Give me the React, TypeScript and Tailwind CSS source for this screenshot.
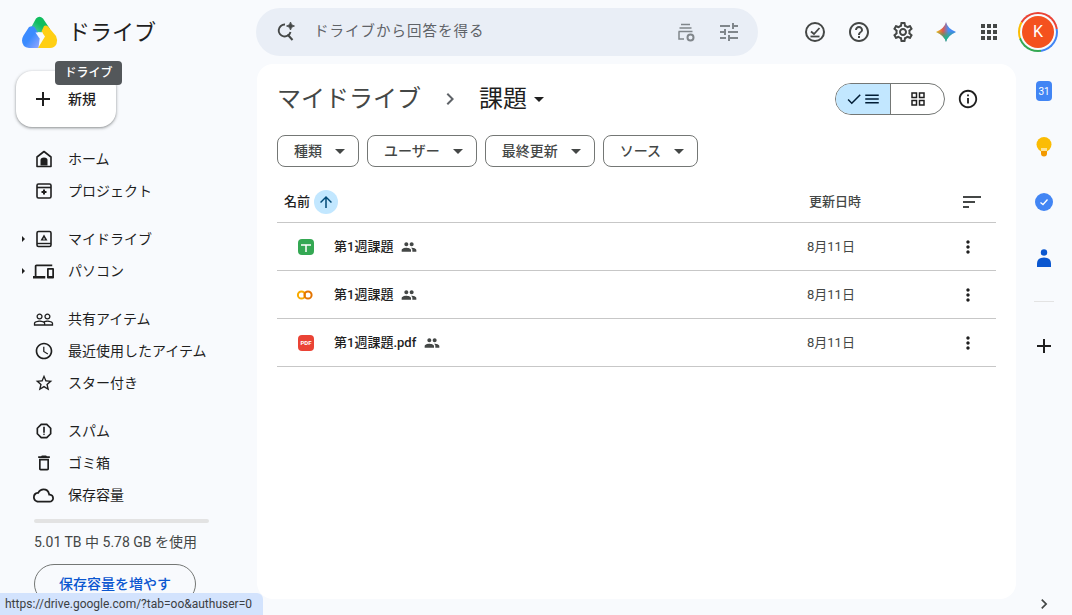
import {
  MdAdd,
  MdApps,
  MdArrowDropDown,
  MdArrowUpward,
  MdCheck,
  MdChevronRight,
  MdInfoOutline,
  MdMenu,
  MdMoreVert,
  MdOutlineAccessTime,
  MdOutlineCloud,
  MdOutlineDelete,
  MdOutlineDevices,
  MdOutlineGridView,
  MdOutlineHelpOutline,
  MdOutlineReport,
  MdOutlineSettings,
  MdPeople,
  MdPeopleOutline,
  MdSort,
  MdStarBorder,
  MdTune,
} from "react-icons/md";
import type { ReactNode } from "react";

const font = { fontFamily: 'Roboto, "Noto Sans CJK JP", sans-serif' };

function DriveLogo() {
  return (
    <svg width="36" height="32" viewBox="0 0 36 32">
      <defs>
        <linearGradient id="lg-blue" x1="0" y1="0" x2="1" y2="1">
          <stop offset="0.5" stopColor="#3b8bff" />
          <stop offset="1" stopColor="#9aa8ff" />
        </linearGradient>
        <linearGradient id="lg-green" x1="0" y1="1" x2="1" y2="0">
          <stop offset="0" stopColor="#5fc8c0" />
          <stop offset="0.5" stopColor="#10bd5f" />
        </linearGradient>
      </defs>
      <path d="M14 2.5Q17.5 -1 21 2.5L28 13L24 13L20.500 16.500L14 16L8 13.500Z" fill="url(#lg-green)" />
      <path d="M7 11Q10 9.500 12.500 11L14 13.500L18 20L16.500 32H7Q0 31 0 24.500Q0 22 1.500 19.500Z" fill="url(#lg-blue)" />
      <path d="M22 10Q24 9 26 10.500L34 20Q36 24 34.500 28Q32.500 32 28 32H16L23 20.500L19.500 15.500Z" fill="#ffcf14" />
      <path d="M13.500 16.500H21L17.500 22.500Z" fill="#f8fafd" />
    </svg>
  );
}

function HomeIcon() {
  return (
    <svg width="20" height="20" viewBox="0 0 20 20" fill="none">
      <path d="M10 2.500 3 8v9.500h14V8z" stroke="#1f1f1f" strokeWidth="1.600" strokeLinejoin="round" />
      <path d="M6.500 16.500V11Q6.500 8.500 10 8.500T13.500 11v5.500z" fill="#1f1f1f" />
    </svg>
  );
}

function ProjectIcon() {
  return (
    <svg width="20" height="20" viewBox="0 0 20 20" fill="none">
      <rect x="3" y="3" width="14" height="14" rx="1.500" stroke="#1f1f1f" strokeWidth="1.600" />
      <path d="M3 6.500h14" stroke="#1f1f1f" strokeWidth="1.600" />
      <path d="M10 8.500v5M7.500 11h5" stroke="#1f1f1f" strokeWidth="2" />
    </svg>
  );
}

function MyDriveIcon() {
  return (
    <svg width="20" height="20" viewBox="0 0 20 20" fill="none">
      <rect x="3" y="2.500" width="14" height="15" rx="1.500" stroke="#1f1f1f" strokeWidth="1.600" />
      <path d="M3 14.500h14" stroke="#1f1f1f" strokeWidth="1.400" />
      <path d="M10 5.500 13.500 11.500h-7z" fill="#1f1f1f" />
      <path d="M10 8.500 11 10.500H9z" fill="#f8fafd" />
    </svg>
  );
}

function OfflineIcon() {
  return (
    <svg width="24" height="24" viewBox="0 0 24 24" fill="none">
      <circle cx="12" cy="12" r="9" stroke="#444746" strokeWidth="2" />
      <path d="M8 11.500 11 14 16.500 8" stroke="#444746" strokeWidth="1.800" />
      <path d="M7.500 16.500h9" stroke="#444746" strokeWidth="1.800" />
    </svg>
  );
}

function SearchSpark() {
  return (
    <svg width="24" height="24" viewBox="0 0 24 24" fill="none">
      <path d="M16.500 7.500Q15 6.500 11 6.500a5.500 5.500 0 1 0 5 8" stroke="#444746" strokeWidth="0" />
      <path d="M12 4.500a6 6 0 1 0 5.500 7.500" stroke="#444746" strokeWidth="1.900" />
      <path d="m14.500 14.500 5 5.500" stroke="#444746" strokeWidth="2" />
      <path d="M17.500 2q.5 3.500 4 4-3.500.5-4 4-.5-3.500-4-4 3.500-.5 4-4z" fill="#444746" stroke="#444746" strokeWidth="0.800" />
    </svg>
  );
}

function DriveSettings() {
  return (
    <svg width="24" height="24" viewBox="0 0 24 24" fill="none">
      <path d="M7 4.500h9M5.500 8h12" stroke="#80868b" strokeWidth="1.500" />
      <path d="M4.500 11.500h14M5 11.500V19h5" stroke="#80868b" strokeWidth="1.500" />
      <circle cx="16.500" cy="17.500" r="3" stroke="#80868b" strokeWidth="2" />
    </svg>
  );
}

function GeminiStar() {
  return (
    <svg width="22" height="22" viewBox="0 0 22 22">
      <defs>
        <linearGradient id="gem-h" x1="0" y1="0" x2="1" y2="0">
          <stop offset="0.05" stopColor="#f5b81d" />
          <stop offset="0.35" stopColor="#e0584d" />
          <stop offset="0.62" stopColor="#4a8ff5" />
          <stop offset="1" stopColor="#3b82f6" />
        </linearGradient>
        <linearGradient id="gem-v" x1="0" y1="0" x2="0" y2="1">
          <stop offset="0.45" stopColor="#34a853" stopOpacity="0" />
          <stop offset="0.8" stopColor="#1fb58f" />
        </linearGradient>
      </defs>
      <path id="gem" d="M11 1Q12.500 7.500 21 11 12.500 14.500 11 21 9.500 14.500 1 11 9.500 7.500 11 1Z" fill="url(#gem-h)" />
      <path d="M11 1Q12.500 7.500 21 11 12.500 14.500 11 21 9.500 14.500 1 11 9.500 7.500 11 1Z" fill="url(#gem-v)" />
    </svg>
  );
}

function NavRow({ icon, label, arrow }: { icon: ReactNode; label: string; arrow?: boolean }) {
  return (
    <div className="flex h-8 items-center text-[14px] text-[#1f1f1f]">
      <div className="flex w-[26px] justify-end pr-[1px]">
        {arrow && <span className="h-0 w-0 border-y-[3px] border-l-[3px] border-y-transparent border-l-[#1f1f1f]" />}
      </div>
      <div className="flex w-[34px] justify-center pl-[1px]">{icon}</div>
      <span className="ml-[8px]">{label}</span>
    </div>
  );
}

function Chip({ label }: { label: string }) {
  return (
    <div className="flex h-8 items-center rounded-lg border border-[#747775] pl-4 pr-[6px] text-[14px] font-medium text-[#444746]">
      <span>{label}</span>
      <MdArrowDropDown className="ml-[6px] text-[#444746]" size={24} />
    </div>
  );
}

function FileRow({ icon, name }: { icon: ReactNode; name: string }) {
  return (
    <div className="flex h-12 items-center border-b border-[#c7c7c7] text-[13px] text-[#1f1f1f]">
      <div className="flex w-[57px] justify-end pr-[20px]">{icon}</div>
      <span className="font-medium">{name}</span>
      <MdPeople className="ml-[8px] text-[#444746]" size={16} />
      <span className="ml-auto w-[151px] text-[#444746]">8月11日</span>
      <MdMoreVert className="mr-[18px] text-[#1f1f1f]" size={20} />
    </div>
  );
}

export default function App() {
  return (
    <div className="relative flex h-[615px] w-[1072px] flex-col overflow-hidden bg-[#f8fafd]" style={font}>
      <header className="flex h-16 items-center">
        <div className="flex w-[256px] items-center pl-[22px]">
          <DriveLogo />
          <span className="ml-[10px] text-[22px] text-[#1f1f1f]">ドライブ</span>
        </div>
        <div className="flex h-12 w-[502px] items-center rounded-3xl bg-[#e9eef6] pl-[17px] pr-[17px]">
          <SearchSpark />
          <span className="ml-[17px] text-[14.500px] tracking-[1px] text-[#5f6368]">ドライブから回答を得る</span>
          <div className="ml-auto flex items-center gap-[19px]">
            <DriveSettings />
            <MdTune className="text-[#80868b]" size={24} />
          </div>
        </div>
        <div className="ml-auto flex items-center pr-[14px]">
          <div className="flex items-center gap-[20px]">
            <OfflineIcon />
            <MdOutlineHelpOutline className="text-[#444746]" size={24} />
            <MdOutlineSettings className="text-[#444746]" size={24} />
            <GeminiStar />
            <MdApps className="text-[#444746]" size={24} />
          </div>
          <div className="ml-[17px] flex h-10 w-10 items-center justify-center rounded-full bg-[conic-gradient(#ea4335_0deg,#ea4335_80deg,#4285f4_80deg,#4285f4_170deg,#34a853_170deg,#34a853_250deg,#fbbc04_250deg,#fbbc04_300deg,#ea4335_300deg)]">
            <div className="flex h-[36px] w-[36px] items-center justify-center rounded-full bg-[#f8fafd]">
              <div className="flex h-8 w-8 items-center justify-center rounded-full bg-[#f4511e] text-[16px] text-white">K</div>
            </div>
          </div>
        </div>
      </header>

      <div className="flex min-h-0 flex-1">
        <aside className="relative w-[257px] shrink-0">
          <div className="absolute left-[55px] top-[-3px] z-10 flex h-6 w-[67px] items-center justify-center rounded bg-[#53575a] text-[12px] font-medium text-white">ドライブ</div>
          <div className="ml-4 mt-[7px] flex h-14 w-[100px] items-center rounded-2xl bg-white pl-[15px] shadow-[0_1px_3px_1px_rgba(60,64,67,0.2),0_1px_2px_rgba(60,64,67,0.35)]">
            <MdAdd className="text-[#1f1f1f]" size={24} />
            <span className="ml-[13px] text-[14px] font-medium text-[#1f1f1f]">新規</span>
          </div>
          <nav className="mt-4 flex flex-col">
            <NavRow icon={<HomeIcon />} label="ホーム" />
            <NavRow icon={<ProjectIcon />} label="プロジェクト" />
            <div className="h-4" />
            <NavRow arrow icon={<MyDriveIcon />} label="マイドライブ" />
            <NavRow arrow icon={<MdOutlineDevices className="text-[#1f1f1f]" size={21} />} label="パソコン" />
            <div className="h-4" />
            <NavRow icon={<MdPeopleOutline className="text-[#1f1f1f]" size={21} />} label="共有アイテム" />
            <NavRow icon={<MdOutlineAccessTime className="text-[#1f1f1f]" size={20} />} label="最近使用したアイテム" />
            <NavRow icon={<MdStarBorder className="text-[#1f1f1f]" size={20} />} label="スター付き" />
            <div className="h-4" />
            <NavRow icon={<MdOutlineReport className="text-[#1f1f1f]" size={20} />} label="スパム" />
            <NavRow icon={<MdOutlineDelete className="text-[#1f1f1f]" size={20} />} label="ゴミ箱" />
            <NavRow icon={<MdOutlineCloud className="text-[#1f1f1f]" size={21} />} label="保存容量" />
          </nav>
          <div className="ml-[34px] mt-[8px] h-1 w-[175px] rounded-full bg-[#e3e3e3]" />
          <div className="ml-[34px] mt-[9px] text-[14px] text-[#444746]">5.01 TB 中 5.78 GB を使用</div>
          <div className="ml-[34px] mt-[11px] flex h-10 w-[162px] items-center justify-center rounded-full border border-[#747775] text-[14px] font-medium text-[#0b57d0]">保存容量を増やす</div>
        </aside>

        <main className="mb-4 h-[535px] w-[759px] shrink-0 rounded-2xl bg-white pl-5 pr-5">
          <div className="flex h-[70px] items-center">
            <span className="text-[24px] text-[#444746]">マイドライブ</span>
            <MdChevronRight className="ml-[17px] text-[#5f6368]" size={24} />
            <span className="ml-[17px] text-[24px] text-[#1f1f1f]">課題</span>
            <MdArrowDropDown className="text-[#1f1f1f]" size={24} />
            <div className="ml-auto flex h-8 w-[110px] overflow-hidden rounded-full border border-[#747775]">
              <div className="flex w-[55px] items-center justify-center border-r border-[#747775] bg-[#c2e7ff] text-[#001d35]">
                <MdCheck size={18} />
                <MdMenu size={18} />
              </div>
              <div className="flex flex-1 items-center justify-center text-[#1f1f1f]">
                <MdOutlineGridView size={18} />
              </div>
            </div>
            <MdInfoOutline className="ml-[12px] mr-[17px] text-[#1f1f1f]" size={22} />
          </div>
          <div className="flex gap-2 pt-[1px]">
            <Chip label="種類" />
            <Chip label="ユーザー" />
            <Chip label="最終更新" />
            <Chip label="ソース" />
          </div>
          <div className="mt-[14px] flex h-[42px] items-center border-b border-[#c7c7c7] text-[13px] font-medium text-[#1f1f1f]">
            <span className="ml-[7px]">名前</span>
            <span className="ml-[4px] flex h-6 w-6 items-center justify-center rounded-full bg-[#c2e7ff] text-[#004a77]">
              <MdArrowUpward size={18} />
            </span>
            <span className="ml-auto w-[151px] text-[#444746]">更新日時</span>
            <MdSort className="mr-[12px] text-[#444746]" size={24} />
          </div>
          <FileRow
            name="第1週課題"
            icon={
              <div className="flex h-4 w-4 items-center justify-center rounded-sm bg-[#34a853]">
                <svg width="10" height="10" viewBox="0 0 10 10"><path d="M0 3h10M5 3v7" stroke="#fff" strokeWidth="1.500" /></svg>
              </div>
            }
          />
          <FileRow
            name="第1週課題"
            icon={
              <svg width="18" height="10" viewBox="0 0 18 10" fill="none">
                <circle cx="5.500" cy="5" r="3.600" stroke="#f9ab00" strokeWidth="2" />
                <circle cx="12" cy="5" r="3.600" stroke="#e37400" strokeWidth="2" />
              </svg>
            }
          />
          <FileRow
            name="第1週課題.pdf"
            icon={
              <div className="flex h-4 w-4 items-center justify-center rounded-sm bg-[#ea4335] text-[6px] font-bold text-white">PDF</div>
            }
          />
        </main>

        <aside className="flex flex-1 flex-col items-center pl-[0px]">
          <div className="mt-[17px] flex h-5 w-4 items-center justify-center rounded-sm bg-[#4285f4] text-[10px] text-white">31</div>
          <div className="mt-[36px] flex h-5 items-center">
            <svg width="16" height="20" viewBox="0 0 16 20">
              <circle cx="8" cy="7.500" r="7.500" fill="#fbbc04" />
              <rect x="5" y="11" width="6" height="3" fill="#fde293" />
              <path d="M5 14h6v2.500a3 3 0 0 1-6 0z" fill="#f29900" />
            </svg>
          </div>
          <div className="mt-[36px] flex h-[18px] w-[18px] items-center justify-center rounded-full bg-[#4285f4]">
            <svg width="10" height="10" viewBox="0 0 10 10" fill="none"><path d="M1.500 5.500 4 7.500 8.500 2.500" stroke="#fff" strokeWidth="1.300" /></svg>
          </div>
          <div className="mt-[38px]">
            <svg width="14" height="18" viewBox="0 0 14 18">
              <circle cx="7" cy="3.500" r="3.200" fill="#0b57d0" />
              <path d="M0 18v-3.500Q0 8.500 7 8.500T14 14.500V18z" fill="#0b57d0" />
            </svg>
          </div>
          <div className="mt-[34px] h-px w-5 bg-[#e3e3e3]" />
          <MdAdd className="mt-[32px] text-[#1f1f1f]" size={24} />
          <MdChevronRight className="mt-auto mb-[1px] text-[#444746]" size={20} />
        </aside>
      </div>

      <div className="absolute bottom-0 left-0 flex h-[22px] w-[263px] items-center rounded-tr-md bg-[#d3e3fd] pl-[5px] text-[12px] text-[#3c4043]">https://drive.google.com/?tab=oo&amp;authuser=0</div>
    </div>
  );
}
